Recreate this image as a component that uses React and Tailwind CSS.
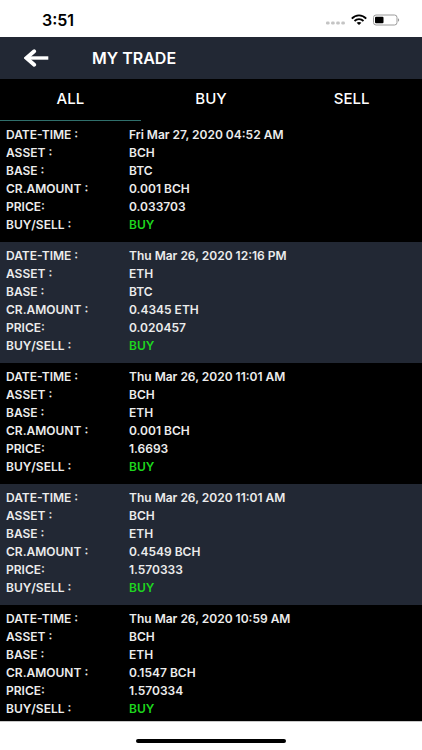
import React, { useState } from 'react';
import clsx from 'clsx';

const trades = [
    { id: 1, date: 'Fri Mar 27, 2020 04:52 AM', asset: 'BCH', base: 'BTC', amount: '0.001', price: '0.033703', side: 'BUY' },
    { id: 2, date: 'Thu Mar 26, 2020 12:16 PM', asset: 'ETH', base: 'BTC', amount: '0.4345', price: '0.020457', side: 'BUY' },
    { id: 3, date: 'Thu Mar 26, 2020 11:01 AM', asset: 'BCH', base: 'ETH', amount: '0.001', price: '1.6693', side: 'BUY' },
    { id: 4, date: 'Thu Mar 26, 2020 11:01 AM', asset: 'BCH', base: 'ETH', amount: '0.4549', price: '1.570333', side: 'BUY' },
    { id: 5, date: 'Thu Mar 26, 2020 10:59 AM', asset: 'BCH', base: 'ETH', amount: '0.1547', price: '1.570334', side: 'BUY' },
];

const tabs = ['ALL', 'BUY', 'SELL'];

function StatusBar() {
    return (
        <div className="flex h-[37px] shrink-0 items-center justify-between bg-white pl-[42px] pr-[22px] pt-0.5 text-black">
            <span className="text-base leading-5 font-semibold">3:51</span>
            <div className="flex items-center gap-1.5">
                <svg width="19" height="12" viewBox="0 0 19 12" fill="#c4c4c4">
                    <rect x="0" y="7.5" width="3.6" height="3" rx="1.3" />
                    <rect x="5.1" y="7.5" width="3.6" height="3" rx="1.3" />
                    <rect x="10.2" y="7.5" width="3.6" height="3" rx="1.3" />
                    <rect x="15.3" y="7.5" width="3.6" height="3" rx="1.3" />
                </svg>
                <svg width="16" height="12" viewBox="0 0 16 12" fill="none" stroke="#000">
                    <path d="M0.8 4.6C4.8 0.3 11.2 0.3 15.2 4.6" strokeWidth="1.9" />
                    <path d="M3.5 7C6 4.5 10 4.5 12.5 7" strokeWidth="1.8" />
                    <path d="M5.6 8.8C7 7.6 9 7.6 10.4 8.8L8 11Z" fill="#000" stroke="none" />
                </svg>
                <svg width="27" height="12" viewBox="0 0 27 12">
                    <rect x="0.5" y="1" width="23.5" height="10" rx="2.5" fill="none" stroke="#9a9a9a" />
                    <rect x="2" y="2.7" width="8.5" height="6.6" rx="1" fill="#000" />
                    <path d="M25 4.2C26.6 4.8 26.6 7.2 25 7.8Z" fill="#9a9a9a" />
                </svg>
            </div>
        </div>
    );
}

function Row({ label, children, className }) {
    return (
        <div className="flex">
            <dt className="w-[123px] shrink-0">{label}</dt>
            <dd className={className}>{children}</dd>
        </div>
    );
}

function TradeCard({ trade }) {
    return (
        <li className="pt-[5px] pb-2 pl-1.5 odd:bg-black even:bg-[#222834]">
            <dl className="text-xs leading-[18px] font-semibold text-[#ececec]">
                <Row label="DATE-TIME :">{trade.date}</Row>
                <Row label="ASSET :">{trade.asset}</Row>
                <Row label="BASE :">{trade.base}</Row>
                <Row label="CR.AMOUNT :">{trade.amount} {trade.asset}</Row>
                <Row label="PRICE:">{trade.price}</Row>
                <Row label="BUY/SELL :" className={trade.side === 'BUY' ? 'text-[#1ed61e]' : 'text-red-500'}>
                    {trade.side}
                </Row>
            </dl>
        </li>
    );
}

function App() {
    const [active, setActive] = useState('ALL');
    const visible = active === 'ALL' ? trades : trades.filter((t) => t.side === active);

    return (
        <div className="flex h-screen flex-col bg-black font-['Inter','Liberation_Sans',sans-serif]">
            <StatusBar />

            <header className="flex h-[42px] shrink-0 items-center bg-[#222834] pl-6 text-white">
                <button type="button" aria-label="Back" className="w-[68px]">
                    <svg width="25" height="18" viewBox="0 0 25 18" fill="none" stroke="currentColor">
                        <path d="M3 9H24.3" strokeWidth="3.4" />
                        <path d="M10.2 2.2L2.4 9L10.2 15.8" strokeWidth="3.8" strokeLinecap="round" strokeLinejoin="miter" />
                    </svg>
                </button>
                <h1 className="text-base font-semibold">MY TRADE</h1>
            </header>

            <nav className="grid h-[42px] shrink-0 grid-cols-3">
                {tabs.map((tab) => (
                    <button
                        key={tab}
                        type="button"
                        onClick={() => setActive(tab)}
                        className={clsx(
                            'border-b text-[15px] font-medium text-white',
                            active === tab ? 'border-[#2f6f6b]' : 'border-transparent'
                        )}
                    >
                        {tab}
                    </button>
                ))}
            </nav>

            <ul className="min-h-0 flex-1 overflow-hidden">
                {visible.map((trade) => (
                    <TradeCard key={trade.id} trade={trade} />
                ))}
            </ul>

            <footer className="flex h-[29px] shrink-0 items-center justify-center border-t border-[#c8c8c8] bg-white pt-2.5">
                <div className="h-1 w-[150px] rounded-full bg-black" />
            </footer>
        </div>
    );
}

export default App;
